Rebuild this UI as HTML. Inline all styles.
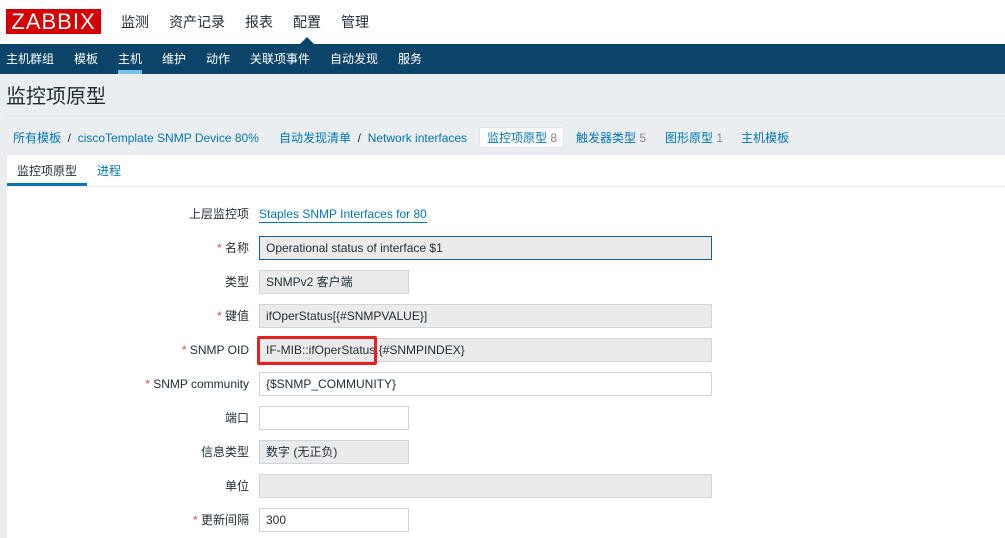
<!DOCTYPE html><html><head><meta charset="utf-8"><style>
*{margin:0;padding:0;box-sizing:border-box}
body{width:1005px;height:538px;overflow:hidden;background:#ebeef0;font-family:"Liberation Sans","Noto Sans CJK SC",sans-serif;font-size:12px;color:#1f2c33;position:relative}
.a{position:absolute;white-space:nowrap;line-height:16px}
.top{position:absolute;left:0;top:0;width:1005px;height:44px;background:#fff}
.logo{left:6px;top:9px;width:95px;height:25px;background:#d40000;color:#fff;font-size:22px;line-height:25px!important;text-align:center;letter-spacing:1px}
.m{top:12px;font-size:14px;color:#1f2c33;line-height:20px!important}
.nav{position:absolute;left:0;top:44px;width:1005px;height:30px;background:#0b4469}
.n{top:51px;color:#fff;font-size:12px}
.lnk{color:#0275b8}
.bc{top:130px;font-size:12px}
.content{position:absolute;left:7px;top:155px;width:998px;height:383px;background:#fff}
.lbl{font-size:12px;text-align:right;width:120px;left:129px}
.in{position:absolute;left:259px;height:24px;border:1px solid #cfd5d9;background:#ebebeb;padding-left:6px;line-height:22px;font-size:12px;white-space:nowrap}
.r{color:#d64e4e}
</style></head><body>
<div class="top"></div>
<div class="a logo">ZABBIX</div>
<div class="a m" style="left:121px">监测</div>
<div class="a m" style="left:169px">资产记录</div>
<div class="a m" style="left:245px">报表</div>
<div class="a m" style="left:293px">配置</div>
<div class="a m" style="left:341px">管理</div>
<div class="nav"></div>
<div class="a" style="left:300px;top:37px;width:0;height:0;border-left:7px solid transparent;border-right:7px solid transparent;border-bottom:7px solid #0b4469"></div>
<div class="a n" style="left:6px">主机群组</div>
<div class="a n" style="left:74px">模板</div>
<div class="a n" style="left:118px">主机</div>
<div class="a" style="left:118px;top:70px;width:24px;height:4px;background:#74c3f5"></div>
<div class="a n" style="left:162px">维护</div>
<div class="a n" style="left:206px">动作</div>
<div class="a n" style="left:250px">关联项事件</div>
<div class="a n" style="left:330px">自动发现</div>
<div class="a n" style="left:398px">服务</div>
<div class="a" style="left:6px;top:84px;font-size:20px;line-height:26px;color:#1f2c33">监控项原型</div>
<div class="a" style="left:6px;top:115px;width:999px;height:1px;background:#dfe4e7"></div>
<div class="a bc" style="left:13px"><span class="lnk">所有模板</span> &nbsp;/&nbsp; <span class="lnk">ciscoTemplate SNMP Device 80%</span></div>
<div class="a bc" style="left:279px"><span class="lnk">自动发现清单</span> &nbsp;/&nbsp; <span class="lnk">Network interfaces</span></div>
<div class="a" style="left:479px;top:127px;width:85px;height:21px;background:#fff;border:1px solid #dfe4e7;border-radius:2px"></div>
<div class="a bc" style="left:487px"><span class="lnk">监控项原型</span> <span style="color:#888">8</span></div>
<div class="a bc" style="left:576px"><span class="lnk">触发器类型</span> <span style="color:#888">5</span></div>
<div class="a bc" style="left:665px"><span class="lnk">图形原型</span> <span style="color:#888">1</span></div>
<div class="a bc" style="left:741px"><span class="lnk">主机模板</span></div>
<div class="content"></div>
<div class="a" style="left:17px;top:163px">监控项原型</div>
<div class="a lnk" style="left:97px;top:163px">进程</div>
<div class="a" style="left:7px;top:183px;width:80px;height:3px;background:#0275b8"></div>
<div class="a" style="left:7px;top:186px;width:998px;height:1px;background:#ebeef0"></div>

<div class="a lbl" style="top:206px">上层监控项</div>
<div class="a lnk" style="left:259px;top:206px;border-bottom:1px solid #0275b8">Staples SNMP Interfaces for 80</div>
<div class="a lbl" style="top:240px"><span class="r">*</span> 名称</div>
<div class="in" style="top:236px;width:453px;border-color:#1a5d8d">Operational status of interface $1</div>
<div class="a lbl" style="top:274px">类型</div>
<div class="in" style="top:270px;width:150px">SNMPv2 客户端</div>
<div class="a lbl" style="top:308px"><span class="r">*</span> 键值</div>
<div class="in" style="top:304px;width:453px">ifOperStatus[{#SNMPVALUE}]</div>
<div class="a lbl" style="top:342px"><span class="r">*</span> SNMP OID</div>
<div class="in" style="top:338px;width:453px">IF-MIB::ifOperStatus.{#SNMPINDEX}</div>
<div class="a" style="left:257px;top:336px;width:120px;height:29px;border:3px solid #e8201f;border-radius:2px"></div>
<div class="a lbl" style="top:376px"><span class="r">*</span> SNMP community</div>
<div class="in" style="top:372px;width:453px;background:#fff">{$SNMP_COMMUNITY}</div>
<div class="a lbl" style="top:410px">端口</div>
<div class="in" style="top:406px;width:150px;background:#fff"></div>
<div class="a lbl" style="top:444px">信息类型</div>
<div class="in" style="top:440px;width:150px">数字 (无正负)</div>
<div class="a lbl" style="top:478px">单位</div>
<div class="in" style="top:474px;width:453px"></div>
<div class="a lbl" style="top:512px"><span class="r">*</span> 更新间隔</div>
<div class="in" style="top:508px;width:150px;background:#fff">300</div>
</body></html>
